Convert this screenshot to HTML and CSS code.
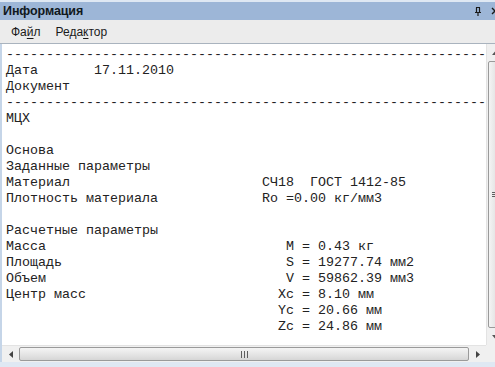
FILE: index.html
```
<!DOCTYPE html>
<html>
<head>
<meta charset="utf-8">
<link rel="stylesheet" href="styles.css">
</head>
<body>
<div class="window">
  <div class="titlebar">
    <span class="title">Информация</span>
    <span class="tbtns">
      <svg class="pin" width="8" height="9" viewBox="0 0 8 9"><path d="M2 0.5h4M2.5 0.5v5M5.5 0.5v5M1 5.5h6M4 5.5v3.5" stroke="#1a1a1a" stroke-width="1.2" fill="none"/></svg>
      <svg class="close" width="8" height="8" viewBox="0 0 8 8"><path d="M1 1l6 6M7 1l-6 6" stroke="#1a1a1a" stroke-width="1.4"/></svg>
    </span>
  </div>
  <div class="menubar">
    <span class="menu">Фа<u>й</u>л</span>
    <span class="menu">Реда<u>к</u>тор</span>
  </div>
  <div class="content">
    <div class="textarea"><pre class="text">------------------------------------------------------------
Дата       17.11.2010
Документ
------------------------------------------------------------
МЦХ

Основа
Заданные параметры
Материал                        СЧ18  ГОСТ 1412-85
Плотность материала             Ro =0.00 кг/мм3

Расчетные параметры
Масса                              M = 0.43 кг
Площадь                            S = 19277.74 мм2
Объем                              V = 59862.39 мм3
Центр масс                        Xc = 8.10 мм
                                  Yc = 20.66 мм
                                  Zc = 24.86 мм</pre></div>
    <div class="vscroll">
      <div class="arrow up"><svg width="7" height="4" viewBox="0 0 7 4"><path d="M0 4L3.5 0L7 4z" fill="#555"/></svg></div>
      <div class="vthumb"><span class="vgrip"></span></div>
      <div class="arrow down"><svg width="7" height="4" viewBox="0 0 7 4"><path d="M0 0L3.5 4L7 0z" fill="#555"/></svg></div>
    </div>
    <div class="hscroll">
      <div class="arrow left"><svg width="4" height="7" viewBox="0 0 4 7"><path d="M4 0L0 3.5L4 7z" fill="#444"/></svg></div>
      <div class="hthumb"><span class="hgrip"></span></div>
      <div class="arrow right"><svg width="4" height="7" viewBox="0 0 4 7"><path d="M0 0L4 3.5L0 7z" fill="#444"/></svg></div>
    </div>
    <div class="corner"></div>
  </div>
</div>
</body>
</html>
```

FILE: styles.css
```
html, body {
  margin: 0;
  padding: 0;
  background: #dfe8f3;
}
body {
  width: 495px;
  height: 367px;
  overflow: hidden;
}
.window {
  width: 503px;
  height: 367px;
  display: flex;
  flex-direction: column;
  background: #dfe8f3;
}
.titlebar {
  height: 18px;
  margin-top: 2px;
  background: #9db6d7;
  display: flex;
  align-items: center;
  justify-content: space-between;
  padding: 0 0 0 3px;
}
.title {
  font-family: "Liberation Sans", Arial, sans-serif;
  font-weight: bold;
  font-size: 12.5px;
  color: #101820;
  letter-spacing: -0.1px;
}
.tbtns {
  display: flex;
  align-items: center;
  gap: 9px;
  margin-right: 4px;
}
.pin { display: block; }
.close { display: block; }
.menubar {
  height: 23px;
  background: #ececec;
  display: flex;
  align-items: center;
  padding-left: 11px;
  gap: 15px;
  border-bottom: 1px solid #a9b3be;
}
.menu {
  font-family: "Liberation Sans", Arial, sans-serif;
  font-size: 12px;
  color: #1a1a1a;
  margin-top: 1px;
}
.menu u { text-decoration-thickness: 1px; text-underline-offset: 2px; }
.content {
  flex: 1;
  display: grid;
  grid-template-columns: 1fr 17px;
  grid-template-rows: 1fr 17px;
  background: #ffffff;
  border-left: 2px solid #c5d5e8;
  margin-bottom: 5px;
  min-height: 0;
}
.textarea {
  overflow: hidden;
  background: #fff;
}
.text {
  margin: 0;
  padding: 3px 0 0 4px;
  font-family: "Liberation Mono", "Courier New", monospace;
  font-size: 13.33px;
  line-height: 16px;
  color: #222222;
}
.vscroll {
  background: #f0f0f0;
  border-left: 1px solid #e3e3e3;
  display: flex;
  flex-direction: column;
}
.arrow {
  display: flex;
  align-items: center;
  justify-content: center;
  flex: none;
}
.vscroll .arrow { height: 17px; }
.vthumb {
  flex: 1;
  margin: 0 1px;
  border: 1px solid #9a9a9a;
  border-radius: 2px;
  background: linear-gradient(to right, #f4f4f4, #e6e6e6 50%, #d8d8d8);
  display: flex;
  align-items: center;
  justify-content: center;
}
.vgrip {
  width: 7px;
  height: 6px;
  background: repeating-linear-gradient(to bottom, #5f5f5f 0 1px, transparent 1px 2px);
}
.hscroll {
  background: #f0f0f0;
  border-top: 1px solid #e3e3e3;
  display: flex;
  align-items: stretch;
}
.hscroll .arrow { width: 17px; }
.hthumb {
  flex: 1;
  margin: 1px 0;
  border: 1px solid #9a9a9a;
  border-radius: 2px;
  background: linear-gradient(to bottom, #f4f4f4, #e6e6e6 50%, #d6d6d6);
  display: flex;
  align-items: center;
  justify-content: center;
}
.hgrip {
  width: 7px;
  height: 7px;
  background: repeating-linear-gradient(to right, #5f5f5f 0 1px, transparent 1px 3px);
}
.corner {
  background: #f0f0f0;
}
```
